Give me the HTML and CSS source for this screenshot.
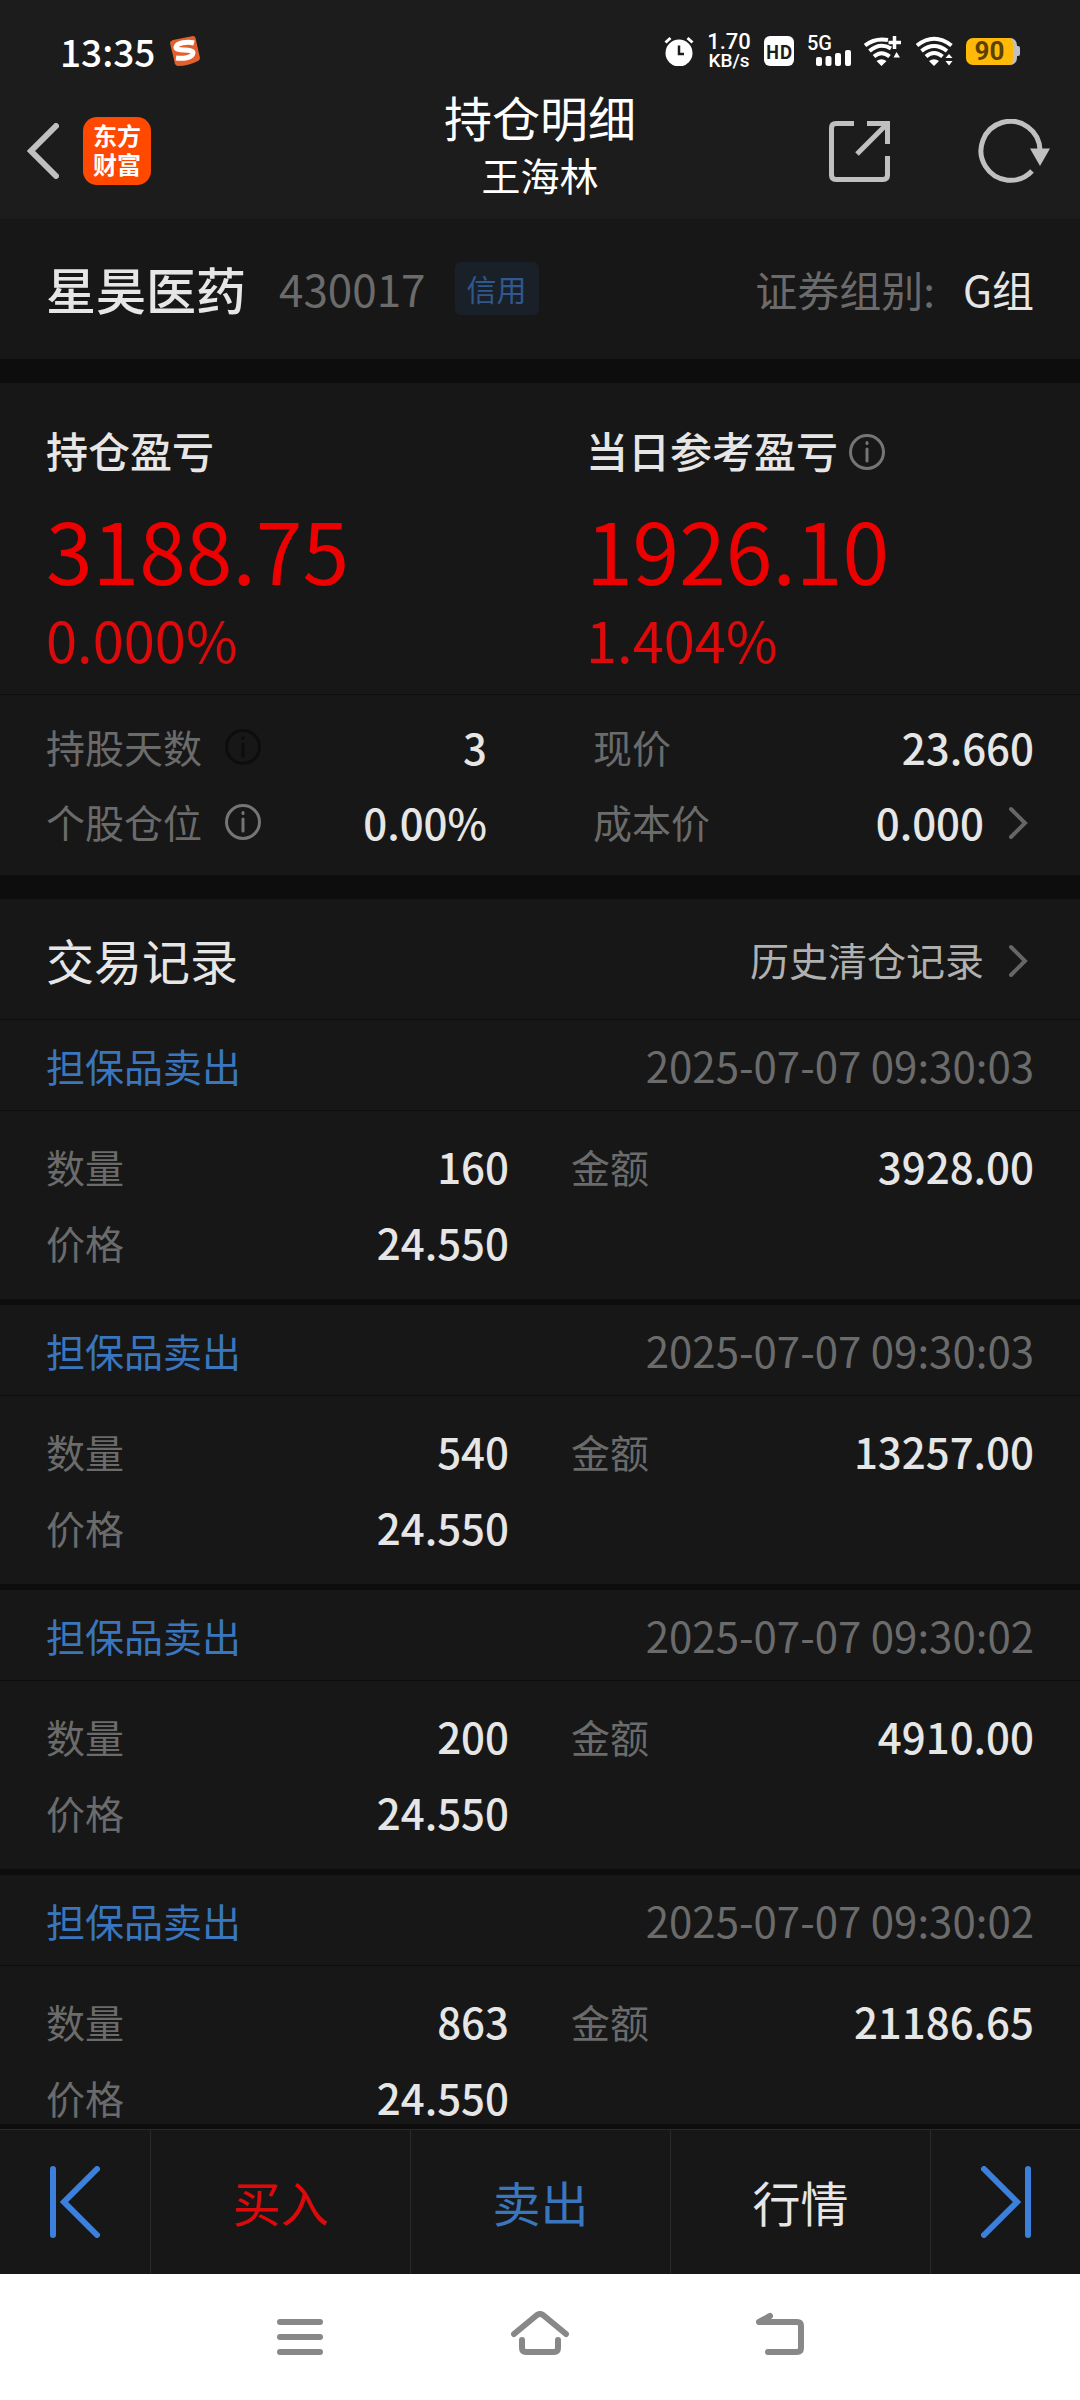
FILE: index.html
```
<!DOCTYPE html>
<html lang="zh-CN">
<head>
    <meta charset="UTF-8">
    <meta name="viewport" content="width=device-width, initial-scale=1.0">
    <title>持仓明细</title>
    <link rel="stylesheet" href="styles.css">
</head>
<body>

<header class="header">
    <div class="status-bar">
        <div class="status-left">
            <span class="clock">13:35</span>
            <svg width="30" height="30" viewBox="0 0 30 30">
                <path d="M3 4 L23 0 Q25 0 25.500 2 L30 22 Q30 24 28 25 Q18 30 8 30 Q6 30 5 28 L0 7 Q0 5 3 4Z" fill="#e2602c"/>
                <path d="M24 7 C17 5 7 7 6 11 C5 16 23 12 23 17 C22 22 13 23 6 22" fill="none" stroke="#fff" stroke-width="5"/>
            </svg>
        </div>
        <div class="status-right">
            <svg width="30" height="30" viewBox="0 0 30 30">
                <circle cx="15" cy="17" r="13.500" fill="#fff"/>
                <path d="M1.500 6.500 L6.500 2 M28.500 6.500 L23.500 2" stroke="#fff" stroke-width="3"/>
                <path d="M15 9.500 V18 H20" fill="none" stroke="#1c1c1c" stroke-width="2.500"/>
            </svg>
            <div class="speed"><span>1.70</span><span class="speed-unit">KB/s</span></div>
            <span class="hd">HD</span>
            <div class="signal">
                <span class="signal-type">5G</span>
                <svg width="44" height="30" viewBox="0 0 44 30">
                    <g fill="#fff">
                        <rect x="9" y="21" width="6" height="9" rx="2"/>
                        <rect x="18.500" y="20" width="6" height="10" rx="2"/>
                        <rect x="28" y="17" width="6" height="13" rx="2"/>
                        <rect x="38" y="14" width="6" height="16" rx="2"/>
                    </g>
                </svg>
            </div>
            <svg width="39" height="30" viewBox="0 0 39 30">
                <g fill="none" stroke="#fff" stroke-width="4">
                    <path d="M1 9.500 Q11 1.500 24 4"/>
                    <path d="M5.500 15 Q16 6 27 12.500"/>
                    <path d="M10 20.500 Q17.500 14 25.500 20.500"/>
                    <path d="M30.500 0 V13 M24.500 6.500 H37" stroke-width="3.500"/>
                </g>
                <path d="M12.500 25 Q17.500 21.500 22.500 25 L17.500 30Z M29.500 21.500 L32.500 16 L36 21.500Z" fill="#fff"/>
            </svg>
            <svg width="37" height="30" viewBox="0 0 37 30">
                <g fill="none" stroke="#fff" stroke-width="4">
                    <path d="M1 9.500 Q18 -4 35.500 9.500"/>
                    <path d="M5.500 15 Q18 5 31 15"/>
                    <path d="M10 20.500 Q18 13.500 26.500 20.500"/>
                </g>
                <path d="M13 25 Q18 21.500 23 25 L18 30Z M29.500 22 L33 18 L36.500 22Z M29.500 25 L33 29.500 L36.500 25Z" fill="#fff"/>
            </svg>
            <div class="battery"><span class="battery-level">90</span></div>
        </div>
    </div>

    <div class="title-bar">
        <div class="title-left">
            <button class="icon-btn" aria-label="返回">
                <svg width="32" height="56" viewBox="0 0 32 56">
                    <path d="M29 3 L4 28 L29 53" fill="none" stroke="#c0c0c0" stroke-width="6" stroke-linecap="round"/>
                </svg>
            </button>
            <div class="logo">东方<br>财富</div>
        </div>
        <div class="title-text">
            <h1 class="title">持仓明细</h1>
            <p class="subtitle">王海林</p>
        </div>
        <div class="title-right">
            <button class="icon-btn" aria-label="分享">
                <svg width="61" height="61" viewBox="0 0 61 61">
                    <g fill="none" stroke="#c0c0c0" stroke-width="5">
                        <path d="M25 2.500 H7 Q2.500 2.500 2.500 7 V54 Q2.500 58.500 7 58.500 H54 Q58.500 58.500 58.500 54 V35"/>
                        <path d="M38 2.500 H58.500 V23 M58 3 L28 33"/>
                    </g>
                </svg>
            </button>
            <button class="icon-btn" aria-label="刷新">
                <svg width="72" height="64" viewBox="0 0 72 64">
                    <path d="M54 52 A29.500 29.500 0 1 1 62 31" fill="none" stroke="#c0c0c0" stroke-width="5"/>
                    <path d="M52 29.500 H72 L62 47Z" fill="#c0c0c0"/>
                </svg>
            </button>
        </div>
    </div>
</header>

<main class="content">
    <section class="stock">
        <h2 class="stock-name">星昊医药</h2>
        <span class="stock-code">430017</span>
        <span class="tag">信用</span>
        <span class="group-label">证券组别:</span>
        <span class="group-value">G组</span>
    </section>

    <section class="profit">
        <div class="profit-col">
            <h3 class="profit-label">持仓盈亏</h3>
            <div class="profit-num">3188.75</div>
            <div class="profit-rate">0.000%</div>
        </div>
        <div class="profit-col">
            <h3 class="profit-label">当日参考盈亏
                <svg class="info" width="36" height="36" viewBox="0 0 36 36">
                    <circle cx="18" cy="18" r="16.500"/>
                    <path d="M18 8.500 V9.500 M18 15 V27"/>
                </svg>
            </h3>
            <div class="profit-num">1926.10</div>
            <div class="profit-rate">1.404%</div>
        </div>
    </section>

    <section class="detail">
        <div class="item">
            <span class="label">持股天数</span>
            <svg class="info info-dark" width="36" height="36" viewBox="0 0 36 36">
                <circle cx="18" cy="18" r="16.500"/>
                <path d="M18 8.500 V9.500 M18 15 V27"/>
            </svg>
            <span class="value">3</span>
        </div>
        <div class="item">
            <span class="label">现价</span>
            <span class="value">23.660</span>
        </div>
        <div class="item">
            <span class="label">个股仓位</span>
            <svg class="info" width="36" height="36" viewBox="0 0 36 36">
                <circle cx="18" cy="18" r="16.500"/>
                <path d="M18 8.500 V9.500 M18 15 V27"/>
            </svg>
            <span class="value">0.00%</span>
        </div>
        <div class="item">
            <span class="label">成本价</span>
            <span class="value">0.000</span>
            <svg class="arrow" width="50" height="34" viewBox="0 0 50 34">
                <path d="M27 3 L41 17 L27 31"/>
            </svg>
        </div>
    </section>

    <section class="records-head">
        <h2 class="records-title">交易记录</h2>
        <a class="history" href="#">历史清仓记录
            <svg class="arrow" width="50" height="34" viewBox="0 0 50 34">
                <path d="M27 3 L41 17 L27 31"/>
            </svg>
        </a>
    </section>

    <article class="record">
        <div class="record-head">
            <span class="record-type">担保品卖出</span>
            <time class="record-time">2025-07-07 09:30:03</time>
        </div>
        <div class="record-body">
            <div class="item"><span class="label">数量</span><span class="value">160</span></div>
            <div class="item"><span class="label">金额</span><span class="value">3928.00</span></div>
            <div class="item"><span class="label">价格</span><span class="value">24.550</span></div>
        </div>
    </article>

    <article class="record">
        <div class="record-head">
            <span class="record-type">担保品卖出</span>
            <time class="record-time">2025-07-07 09:30:03</time>
        </div>
        <div class="record-body">
            <div class="item"><span class="label">数量</span><span class="value">540</span></div>
            <div class="item"><span class="label">金额</span><span class="value">13257.00</span></div>
            <div class="item"><span class="label">价格</span><span class="value">24.550</span></div>
        </div>
    </article>

    <article class="record">
        <div class="record-head">
            <span class="record-type">担保品卖出</span>
            <time class="record-time">2025-07-07 09:30:02</time>
        </div>
        <div class="record-body">
            <div class="item"><span class="label">数量</span><span class="value">200</span></div>
            <div class="item"><span class="label">金额</span><span class="value">4910.00</span></div>
            <div class="item"><span class="label">价格</span><span class="value">24.550</span></div>
        </div>
    </article>

    <article class="record">
        <div class="record-head">
            <span class="record-type">担保品卖出</span>
            <time class="record-time">2025-07-07 09:30:02</time>
        </div>
        <div class="record-body">
            <div class="item"><span class="label">数量</span><span class="value">863</span></div>
            <div class="item"><span class="label">金额</span><span class="value">21186.65</span></div>
            <div class="item"><span class="label">价格</span><span class="value">24.550</span></div>
        </div>
    </article>
</main>

<nav class="actions">
    <button class="action action-side" aria-label="上一只">
        <svg width="50" height="72" viewBox="0 0 50 72">
            <path d="M3 3 V69 M47 3 L14 36 L47 69"/>
        </svg>
    </button>
    <button class="action buy">买入</button>
    <button class="action sell">卖出</button>
    <button class="action">行情</button>
    <button class="action action-side" aria-label="下一只">
        <svg width="50" height="72" viewBox="0 0 50 72">
            <path d="M47 3 V69 M3 3 L36 36 L3 69"/>
        </svg>
    </button>
</nav>

<nav class="system-nav">
    <button class="system-btn" aria-label="最近任务">
        <svg width="46" height="52" viewBox="0 0 46 52">
            <path d="M3 11 H43 M3 26 H43 M3 41 H43"/>
        </svg>
    </button>
    <button class="system-btn" aria-label="主屏幕">
        <svg width="58" height="52" viewBox="0 0 58 52">
            <path d="M3 23 L26 4 Q29 2 32 4 L55 23 M11 29 V37 Q11 41 15 41 H43 Q47 41 47 37 V29"/>
        </svg>
    </button>
    <button class="system-btn" aria-label="返回上一页">
        <svg width="48" height="52" viewBox="0 0 48 52">
            <path d="M14 5 L3 11 H41 Q45 11 45 15 V37 Q45 41 41 41 H12"/>
        </svg>
    </button>
</nav>

</body>
</html>
```
FILE: styles.css
```
* {
    box-sizing: border-box;
}
body {
    margin: 0;
    height: 100vh;
    display: flex;
    flex-direction: column;
    background-color: #171717;
    color: #e6e6e6;
    font-family: "Noto Sans CJK SC", sans-serif;
    font-size: 39px;
}
h1, h2, h3, p {
    margin: 0;
    font-weight: 400;
}
button {
    padding: 0;
    border: none;
    background: none;
    color: inherit;
    font-family: inherit;
    cursor: pointer;
}
svg {
    display: block;
    flex-shrink: 0;
}

/* header */
.header {
    background-color: #1c1c1c;
    color: #fff;
}
.status-bar {
    display: flex;
    justify-content: space-between;
    align-items: center;
    height: 86px;
    padding: 16px 60px 0;
}
.status-left {
    display: flex;
    align-items: center;
    gap: 15px;
}
.clock {
    font-size: 37px;
    line-height: 44px;
    font-weight: 500;
}
.status-right {
    display: flex;
    align-items: center;
    gap: 13px;
}
.speed {
    display: flex;
    flex-direction: column;
    align-items: center;
    width: 44px;
    font-family: Roboto, sans-serif;
    font-size: 22px;
    line-height: 19px;
    font-weight: 500;
}
.speed-unit {
    font-size: 19px;
}
.hd {
    width: 30px;
    border-radius: 6px;
    background-color: #fff;
    color: #1c1c1c;
    font-size: 18px;
    line-height: 30px;
    font-weight: 700;
    text-align: center;
}
.signal {
    position: relative;
}
.signal-type {
    position: absolute;
    top: -4px;
    left: 0;
    font-family: Roboto, sans-serif;
    font-size: 20px;
    line-height: 22px;
    font-weight: 500;
}
.battery {
    display: flex;
    align-items: center;
    width: 54px;
}
.battery-level {
    width: 51px;
    border-right: 4px solid #c0c0c0;
    border-radius: 7px;
    background-color: #ffb908;
    color: #5c4000;
    font-family: Roboto, sans-serif;
    font-size: 26px;
    line-height: 27px;
    font-weight: 700;
    text-align: center;
}
.battery::after {
    content: "";
    width: 3px;
    height: 10px;
    border-radius: 0 2px 2px 0;
    background-color: #c0c0c0;
}
.title-bar {
    display: grid;
    grid-template-columns: 1fr auto 1fr;
    align-items: center;
    padding-bottom: 3px;
}
.title-left {
    display: flex;
    align-items: center;
    gap: 24px;
    padding-left: 27px;
}
.logo {
    width: 68px;
    padding: 3px 0 7px;
    border-radius: 14px;
    background-color: #ff4800;
    font-size: 24px;
    line-height: 29px;
    font-weight: 700;
    text-align: center;
}
.title-text {
    padding-bottom: 14px;
    text-align: center;
}
.title {
    font-size: 48px;
    line-height: 60px;
}
.subtitle {
    font-size: 39px;
    line-height: 56px;
}
.title-right {
    display: flex;
    justify-content: flex-end;
    align-items: center;
    gap: 88px;
    padding-right: 30px;
}

/* content */
.content {
    flex: 1;
    min-height: 0;
    overflow: hidden;
    border-bottom: 5px solid #0d0d0d;
}
.stock {
    display: flex;
    align-items: center;
    height: 164px;
    padding: 0 46px 2px;
    border-bottom: 24px solid #0d0d0d;
}
.stock-name {
    font-size: 50px;
    font-weight: 500;
}
.stock-code {
    margin-left: 33px;
    color: #6b6b6b;
    font-size: 44px;
}
.tag {
    margin-left: 29px;
    padding: 0 12px;
    border-radius: 6px;
    background-color: #1a2028;
    color: #30588c;
    font-size: 30px;
    line-height: 53px;
}
.group-label {
    margin-left: auto;
    color: #6b6b6b;
    font-size: 42px;
}
.group-value {
    margin-left: 28px;
    font-size: 42px;
}
.profit {
    display: grid;
    grid-template-columns: 1fr 1fr;
    border-bottom: 1px solid #0d0d0d;
}
.profit-col {
    padding: 40px 0 23px 46px;
    color: #ec0000;
}
.profit-label {
    display: flex;
    align-items: center;
    gap: 11px;
    color: #e6e6e6;
    font-size: 42px;
    line-height: 54px;
    font-weight: 500;
}
.profit-label .info {
    margin-top: 4px;
}
.profit-num {
    margin-top: 22px;
    font-size: 84px;
    line-height: 100px;
}
.profit-rate {
    margin-top: 8px;
    color: #dc0a0a;
    font-size: 56px;
    line-height: 64px;
}
.info {
    fill: none;
    stroke: #757575;
    stroke-width: 3;
    stroke-linecap: round;
}
.info-dark {
    stroke: #0d0d0d;
}
.detail {
    display: grid;
    grid-template-columns: 1fr 1fr;
    column-gap: 106px;
    padding: 14px 46px 16px;
    border-bottom: 24px solid #0d0d0d;
}
.item {
    display: flex;
    align-items: center;
    line-height: 75px;
}
.item .info {
    margin-left: 23px;
}
.label {
    color: #6b6b6b;
}
.value {
    margin-left: auto;
    font-size: 42px;
    font-weight: 500;
}
.arrow {
    margin-top: 3px;
    fill: none;
    stroke: #666;
    stroke-width: 4;
    stroke-linecap: round;
}
.records-head {
    display: flex;
    justify-content: space-between;
    align-items: center;
    padding: 0 46px;
    border-bottom: 1px solid #0d0d0d;
    line-height: 120px;
}
.records-title {
    font-size: 48px;
}
.history {
    display: flex;
    align-items: center;
    color: #b0b0b0;
    text-decoration: none;
}
.record {
    border-bottom: 6px solid #0d0d0d;
}
.record-head {
    display: flex;
    justify-content: space-between;
    padding: 0 46px;
    border-bottom: 1px solid #0d0d0d;
    line-height: 90px;
}
.record-type {
    color: #3a76bd;
}
.record-time {
    color: #6b6b6b;
    font-size: 42px;
}
.record-body {
    display: grid;
    grid-template-columns: 1fr 1fr;
    column-gap: 62px;
    padding: 17px 46px 19px;
}
.record-body .item {
    line-height: 76px;
}

/* bottom bars */
.actions {
    display: flex;
    height: 145px;
    border-top: 1px solid #2a2a2a;
}
.action {
    flex: 1;
    padding-bottom: 2px;
    font-size: 48px;
}
.action + .action {
    border-left: 1px solid #2a2a2a;
}
.action-side {
    flex: 0 0 150px;
    padding-bottom: 0;
}
.action svg {
    margin: 0 auto;
    fill: none;
    stroke: #3a80dc;
    stroke-width: 6;
    stroke-linecap: round;
}
.buy {
    color: #dc0a0a;
}
.sell {
    color: #3a76bd;
}
.system-nav {
    display: flex;
    justify-content: center;
    height: 126px;
    background-color: #fff;
}
.system-btn {
    width: 240px;
}
.system-btn svg {
    margin: 0 auto;
    fill: none;
    stroke: #888;
    stroke-width: 6;
    stroke-linecap: round;
    stroke-linejoin: round;
}
```
